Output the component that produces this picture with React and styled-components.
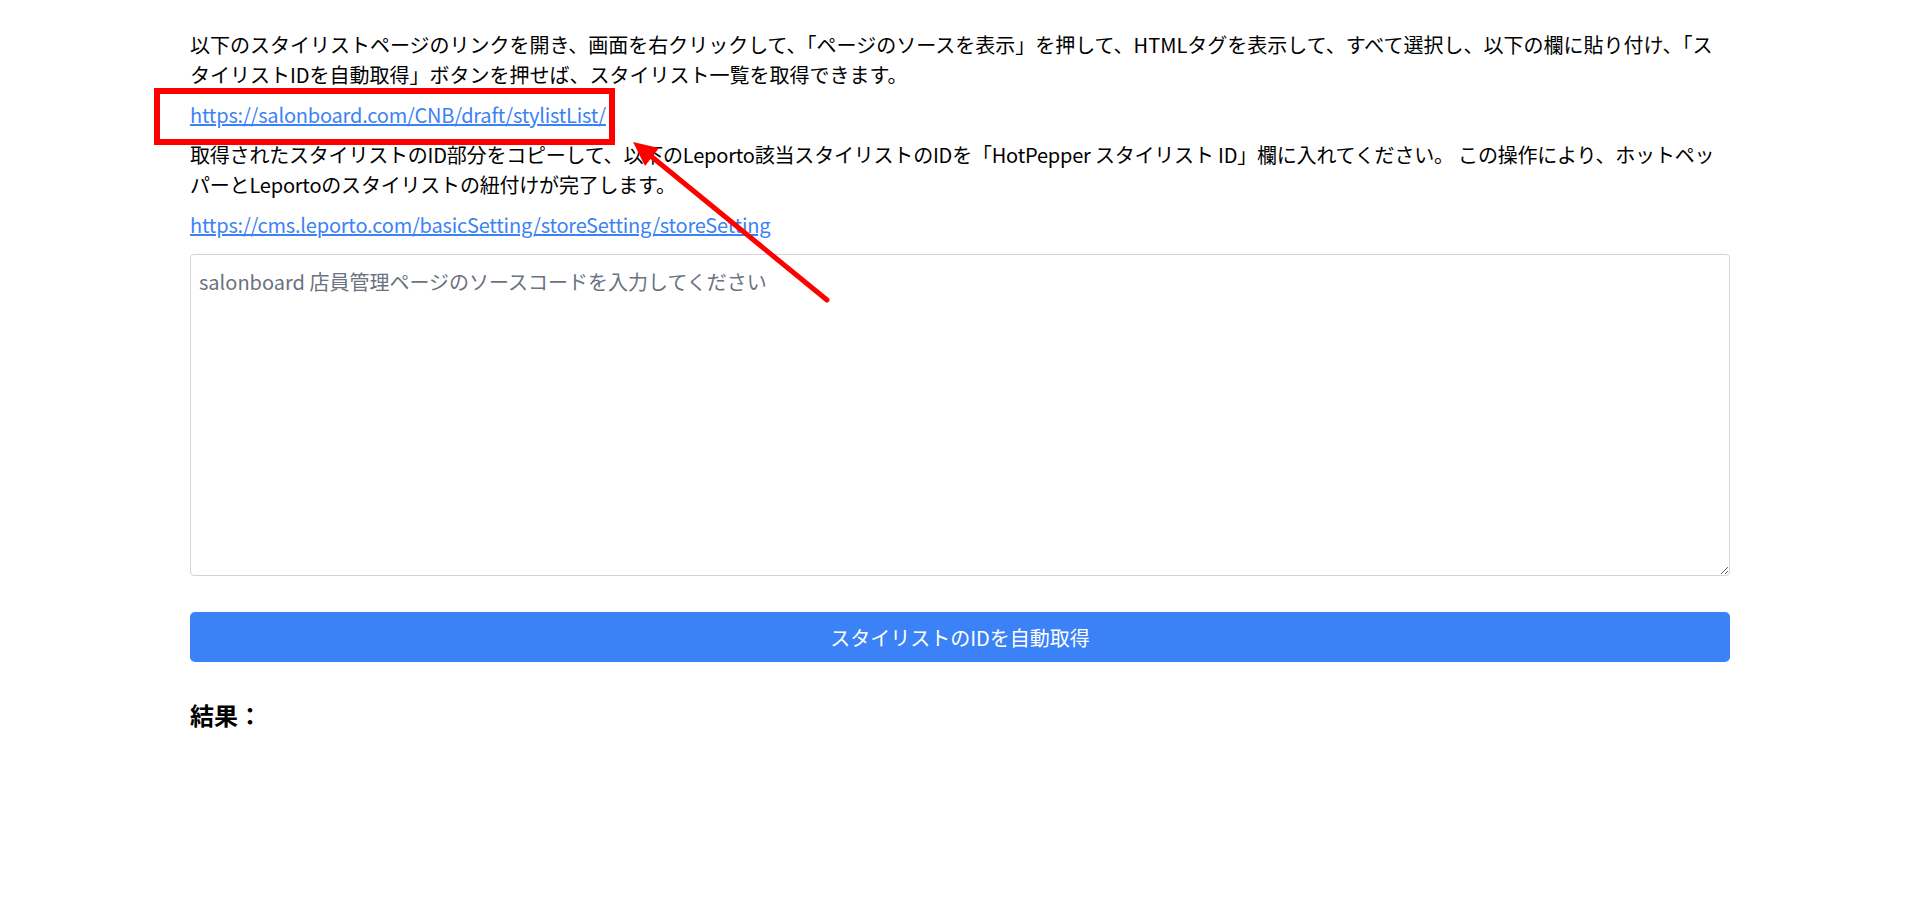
import React from "react";
import styled, { createGlobalStyle } from "styled-components";

const GlobalStyle = createGlobalStyle`
  body {
    margin: 0;
    background: #fff;
    color: #000;
    font-family: "Noto Sans CJK JP", "Noto Sans", sans-serif;
  }
`;

const Page = styled.div`
  position: relative;
  min-height: 912px;
`;

const Container = styled.div`
  width: 1540px;
  margin: 0 auto;
  padding-top: 30px;
`;

const Text = styled.p`
  margin: 0 0 10px;
  font-size: 20px;
  line-height: 30px;
  letter-spacing: ${(p) => p.$tracking || "-0.2px"};
`;

const Link = styled.a`
  color: #3b82f6;
  text-decoration: underline;
`;

const SourceInput = styled.textarea`
  display: block;
  box-sizing: border-box;
  width: 100%;
  height: 322px;
  margin-top: 14px;
  padding: 12px 8px;
  border: 1px solid #d1d5db;
  border-radius: 4px;
  font-family: inherit;
  font-size: 20px;
  line-height: 30px;
  resize: vertical;
  &::placeholder {
    color: #6b7280;
  }
`;

const FetchButton = styled.button`
  display: block;
  width: 100%;
  height: 50px;
  margin-top: 36px;
  border: none;
  border-radius: 5px;
  background: #3b82f6;
  color: #fff;
  font-family: inherit;
  font-size: 20px;
  cursor: pointer;
`;

const ResultTitle = styled.h3`
  margin: 35px 0 0;
  font-size: 24px;
  line-height: 36px;
  font-weight: 700;
`;

// red annotation drawn over the page
const Annotation = styled.svg`
  position: absolute;
  left: 0;
  top: 0;
  width: 1920px;
  height: 912px;
  pointer-events: none;
`;

function App() {
  return (
    <Page>
      <GlobalStyle />
      <Container>
        <Text $tracking="0px">
          以下のスタイリストページのリンクを開き、画面を右クリックして、「ページのソースを表示」を押して、HTMLタグを表示して、すべて選択し、以下の欄に貼り付け、「スタイリストIDを自動取得」ボタンを押せば、スタイリスト一覧を取得できます。
        </Text>
        <Text>
          <Link href="#">https://salonboard.com/CNB/draft/stylistList/</Link>
        </Text>
        <Text>
          取得されたスタイリストのID部分をコピーして、以下のLeporto該当スタイリストのIDを「HotPepper スタイリスト ID」欄に入れてください。 この操作により、ホットペッパーとLeportoのスタイリストの紐付けが完了します。
        </Text>
        <Text>
          <Link href="#">https://cms.leporto.com/basicSetting/storeSetting/storeSetting</Link>
        </Text>
        <SourceInput placeholder="salonboard 店員管理ページのソースコードを入力してください" />
        <FetchButton>スタイリストのIDを自動取得</FetchButton>
        <ResultTitle>結果：</ResultTitle>
      </Container>
      <Annotation viewBox="0 0 1920 912">
        <rect x="157" y="91" width="455" height="51" fill="none" stroke="#ff0000" strokeWidth="6" />
        <line x1="827" y1="300" x2="652" y2="157" stroke="#ff0000" strokeWidth="5" strokeLinecap="round" />
        <polygon points="633,142 659,148 645,166" fill="#ff0000" />
      </Annotation>
    </Page>
  );
}

export default App;
